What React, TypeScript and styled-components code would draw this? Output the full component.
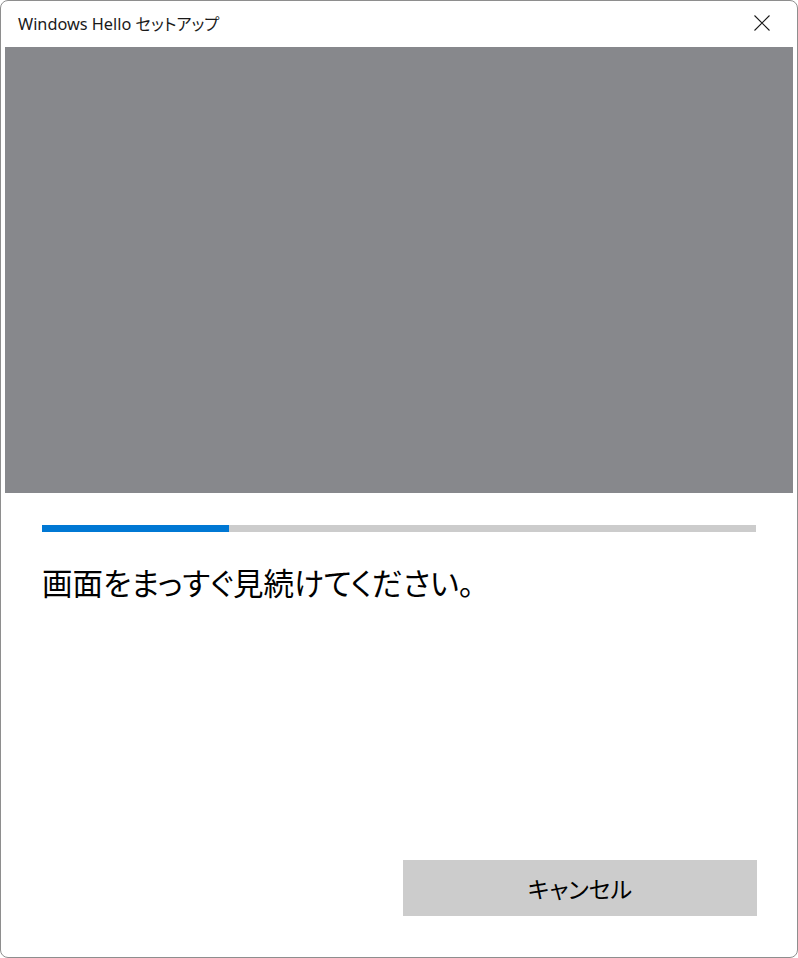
import React from "react";
import styled, {createGlobalStyle} from "styled-components";

const GlobalStyle = createGlobalStyle`
  html, body {
    margin: 0;
    padding: 0;
    background: #ffffff;
  }
  body {
    font-family: "Noto Sans", "Noto Sans CJK JP", sans-serif;
  }
`;

const StyledWindow = styled.div`
  box-sizing: border-box;
  width: 798px;
  height: 958px;
  border: 1px solid #8e8e8e;
  border-radius: 8px;
  background: #ffffff;
  display: flex;
  flex-direction: column;
  overflow: hidden;
`;

const StyledTitleBar = styled.div`
  height: 46px;
  flex-shrink: 0;
  display: flex;
  align-items: center;
  justify-content: space-between;
  padding: 0 23px 0 17px;
`;

const StyledTitle = styled.div`
  font-size: 16.3px;
  color: #1a1a1a;
  font-feature-settings: "palt";
  margin-top: -2px;
`;

const StyledCloseButton = styled.button`
  width: 24px;
  height: 24px;
  padding: 0;
  border: none;
  background: transparent;
  display: flex;
  align-items: center;
  justify-content: center;
  margin-top: -2px;
`;

const StyledBody = styled.div`
  flex: 1;
  display: flex;
  flex-direction: column;
  padding: 0 4px;
`;

const StyledCamera = styled.div`
  height: 446px;
  background: #87888c;
`;

const StyledContent = styled.div`
  flex: 1;
  display: flex;
  flex-direction: column;
  padding: 32px 37px 41px;
`;

const StyledProgressTrack = styled.div`
  height: 7px;
  background: #cccccc;
`;

const StyledProgressFill = styled.div<{percent: number}>`
  height: 100%;
  width: ${props => props.percent}%;
  background: #0078d4;
`;

const StyledMessage = styled.div`
  margin-top: 28px;
  font-family: "Noto Sans CJK JP", sans-serif;
  font-size: 30.5px;
  line-height: 44px;
  color: #000000;
  font-feature-settings: "palt";
`;

const StyledFooter = styled.div`
  margin-top: auto;
  display: flex;
  justify-content: flex-end;
`;

const StyledButton = styled.button`
  width: 354px;
  height: 56px;
  margin-right: -1px;
  border: none;
  background: #cccccc;
  font-family: "Noto Sans CJK JP", sans-serif;
  font-size: 23px;
  color: #000000;
  font-feature-settings: "palt";
`;

function CloseIcon() {
    return (
        <svg width="16" height="16" viewBox="0 0 16 16">
            <path d="M0.5 0.5 L15.5 15.5 M15.5 0.5 L0.5 15.5" stroke="#1a1a1a" strokeWidth="1.1" fill="none"/>
        </svg>
    );
}

export default function App() {
    return (
        <>
            <GlobalStyle/>
            <StyledWindow>
                <StyledTitleBar>
                    <StyledTitle>Windows Hello セットアップ</StyledTitle>
                    <StyledCloseButton aria-label="閉じる">
                        <CloseIcon/>
                    </StyledCloseButton>
                </StyledTitleBar>
                <StyledBody>
                    <StyledCamera/>
                    <StyledContent>
                        <StyledProgressTrack>
                            <StyledProgressFill percent={26.2}/>
                        </StyledProgressTrack>
                        <StyledMessage>画面をまっすぐ見続けてください。</StyledMessage>
                        <StyledFooter>
                            <StyledButton>キャンセル</StyledButton>
                        </StyledFooter>
                    </StyledContent>
                </StyledBody>
            </StyledWindow>
        </>
    );
}
